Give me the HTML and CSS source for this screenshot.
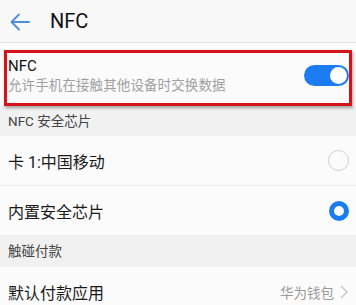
FILE: index.html
```html
<!DOCTYPE html>
<html lang="zh">
<head>
<meta charset="utf-8">
<link rel="stylesheet" href="styles.css">
</head>
<body>
<div class="screen">
  <header class="appbar">
    <svg class="back" width="20" height="18" viewBox="0 0 20 18"><path d="M9 1.5 L1.5 9 L9 16.5 M1.5 9 H19" fill="none" stroke="#4a8ddb" stroke-width="1.8" stroke-linecap="round" stroke-linejoin="round"/></svg>
    <span class="title">NFC</span>
  </header>
  <div class="row nfc">
    <div class="texts">
      <div class="main">NFC</div>
      <div class="sub">允许手机在接触其他设备时交换数据</div>
    </div>
    <div class="toggle"><div class="knob"></div></div>
    <div class="highlight"></div>
  </div>
  <div class="section">NFC 安全芯片</div>
  <div class="row item">
    <span class="label">卡 1:中国移动</span>
    <span class="radio"></span>
  </div>
  <div class="row item">
    <span class="label">内置安全芯片</span>
    <span class="radio on"></span>
  </div>
  <div class="section second">触碰付款</div>
  <div class="row item last">
    <span class="label">默认付款应用</span>
    <span class="value">华为钱包</span>
    <svg class="chev" width="8" height="14" viewBox="0 0 8 14"><path d="M1 1 L7 7 L1 13" fill="none" stroke="#c4c4c4" stroke-width="1.3"/></svg>
  </div>
</div>
</body>
</html>
```
FILE: styles.css
```css
html, body { margin: 0; padding: 0; background: #fafafa; }
.screen {
  width: 356px; height: 305px; overflow: hidden;
  font-family: Roboto, "Noto Sans CJK SC", sans-serif;
  color: #1c1c1c;
  background: #fafafa;
}
.appbar {
  height: 42px; display: flex; align-items: center;
  border-bottom: 1px solid #e3e3e3; background: #f8f8f8;
  box-sizing: content-box;
}
.back { margin-left: 10px; margin-top: 1px; }
.title { margin-left: 20px; font-size: 20px; color: #111; }
.row { display: flex; align-items: center; padding: 0 8px 0 8px; background: #fbfbfb; }
.nfc { position: relative; height: 63px; }
.texts { flex: 1; display: flex; flex-direction: column; padding-top: 1px; }
.main { font-size: 15px; line-height: 18px; color: #111; }
.sub { font-size: 13.5px; line-height: 18px; color: #a0a0a0; margin-top: 1px; letter-spacing: 0.1px; }
.toggle {
  width: 45px; height: 21px; border-radius: 11px; background: #1a7cf0;
  margin-top: 2px; margin-right: -1px; position: relative;
}
.knob {
  position: absolute; right: 2px; top: 2px; width: 17px; height: 17px;
  border-radius: 50%; background: #fff;
}
.highlight {
  position: absolute; left: 4px; top: 7px; width: 342px; height: 50px;
  border: 3px solid #d8121b; box-shadow: 1px 2px 3px rgba(0,0,0,0.35);
}
.section {
  height: 30px; line-height: 30px; padding-left: 8px;
  background: #f1f1f1; font-size: 13.5px; color: #444;
}
.section.second { height: 31px; line-height: 31px; }
.item { height: 49px; border-bottom: 1px solid #ececec; margin: 0; }
.item.last { border-bottom: none; }
.label { flex: 1; font-size: 16px; color: #1a1a1a; }
.radio {
  width: 19px; height: 19px; border-radius: 50%; border: 1px solid #cfcfcf;
  margin-right: -1px; box-sizing: content-box;
}
.radio.on { width: 10px; height: 10px; border: 5px solid #1a7cf0; }
.value { font-size: 13.5px; color: #9a9a9a; margin-right: 6px; }
.chev { margin-right: 0px; }
```
